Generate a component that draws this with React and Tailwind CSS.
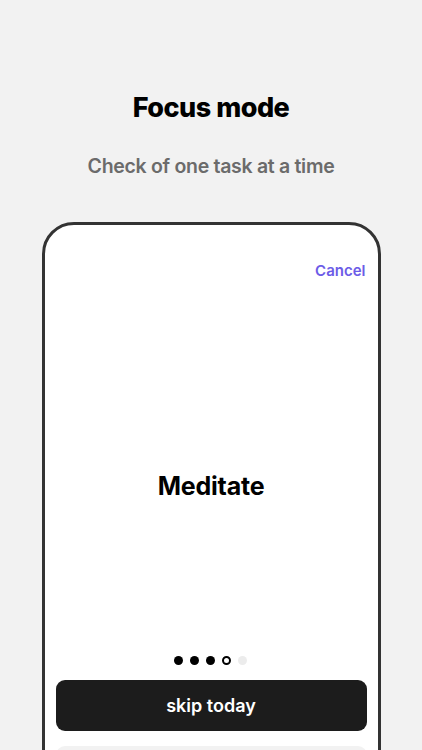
export default function App() {
  return (
    <div
      className="w-[422px] h-[750px] overflow-hidden bg-[#f2f2f2] flex flex-col items-center"
      style={{ fontFamily: 'Inter, "Noto Sans", sans-serif' }}
    >
      <h1 className="mt-[92px] text-[27px] leading-[32px] font-extrabold text-black tracking-[-0.5px]">
        Focus mode
      </h1>
      <p className="mt-[30px] text-[19.5px] leading-[24px] font-semibold text-[#6b6b6b] tracking-[-0.3px]">
        Check of one task at a time
      </p>
      <div className="mt-[44px] w-[339px] h-[600px] shrink-0 bg-white border-[3px] border-[#333333] rounded-[32px] flex flex-col px-[11px]">
        <div className="flex justify-end pt-[36px] pr-[1px]">
          <span className="text-[15px] leading-[20px] font-semibold text-[#6c5ce7]">Cancel</span>
        </div>
        <div className="h-[375px] pt-[35px] flex items-center justify-center">
          <span className="text-[25px] leading-[30px] font-bold text-black tracking-[-0.2px]">Meditate</span>
        </div>
        <div className="flex justify-center gap-[7px] pr-[2px]">
          <span className="w-[9px] h-[9px] rounded-full bg-black" />
          <span className="w-[9px] h-[9px] rounded-full bg-black" />
          <span className="w-[9px] h-[9px] rounded-full bg-black" />
          <span className="w-[9px] h-[9px] rounded-full border-2 border-black" />
          <span className="w-[9px] h-[9px] rounded-full bg-[#ececec]" />
        </div>
        <button className="mt-[15px] h-[51px] w-full rounded-[9px] bg-[#1c1c1c] text-white text-[18px] font-semibold">
          skip today
        </button>
        <div className="mt-[15px] h-[51px] w-full rounded-[9px] bg-[#f2f2f2]" />
      </div>
    </div>
  );
}
